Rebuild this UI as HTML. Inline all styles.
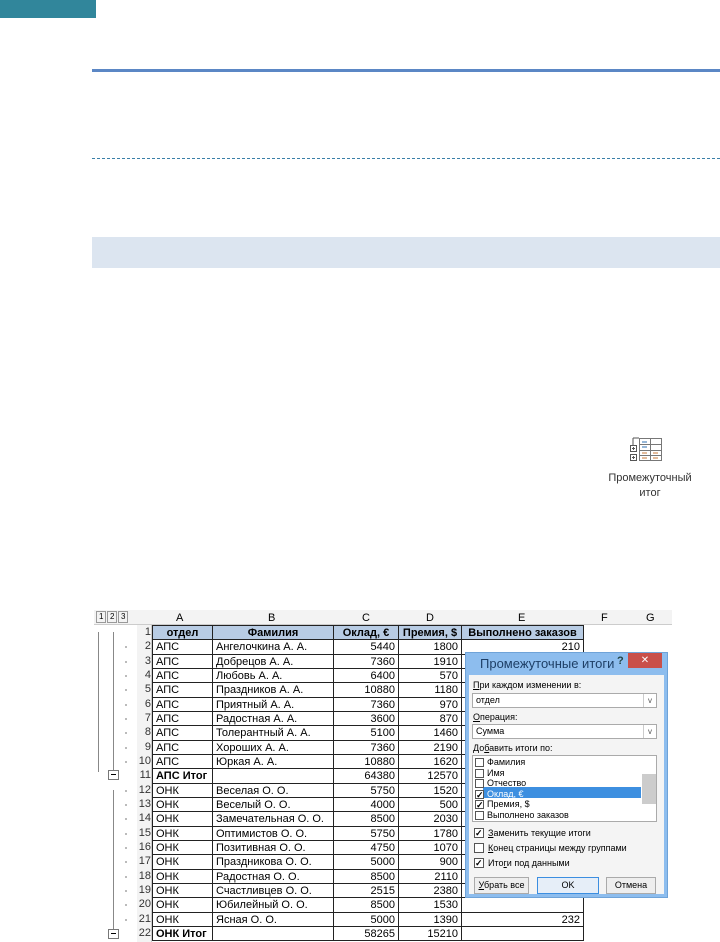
<!DOCTYPE html>
<html><head><meta charset="utf-8"><style>
*{margin:0;padding:0;box-sizing:border-box}
body{width:720px;height:942px;position:relative;background:#fff;font-family:"Liberation Sans",Arial,sans-serif;overflow:hidden}
.a{position:absolute}
.c{position:absolute;font-size:11px;line-height:14px;white-space:nowrap;color:#000}
.d{font-family:"Liberation Sans",sans-serif;font-size:9px;color:#000}
</style></head><body>
<div class="a" style="left:0;top:0;width:96px;height:18px;background:#31869b"></div>
<div class="a" style="left:92px;top:69px;width:628px;height:3px;background:#5b87c5"></div>
<div class="a" style="left:92px;top:158px;width:628px;border-top:1px dashed #3a7fa8"></div>
<div class="a" style="left:92px;top:237px;width:628px;height:31px;background:#dce5f0"></div>

<svg class="a" style="left:628px;top:437px" width="50" height="26" viewBox="0 0 50 26">
<g fill="none" stroke="#555" stroke-width="1"><path d="M5 1h6M5 1v7"/><rect x="2.5" y="8.5" width="6" height="6"/><rect x="2.5" y="17.5" width="6" height="6"/><path d="M4 11.5h3M5.5 10v3M4 20.5h3M5.5 19v3"/></g>
<g fill="none" stroke="#777"><rect x="11.5" y="1.5" width="22" height="22"/><path d="M11.5 7.5h22M11.5 13.5h22M11.5 18.5h22M22.5 1.5v22"/></g>
<g stroke="#2e6fb0"><path d="M14 5h5M14 10h5"/></g><g stroke="#c87a3a"><path d="M14 16h5M25 16h5M14 21h5M25 21h5"/></g>
</svg>
<div class="a" style="left:600px;top:471px;width:100px;text-align:center;font-size:11px;line-height:15px;color:#333">Промежуточный<br>итог</div>

<div class="a" style="left:94px;top:610px;width:578px;height:332px;background:#fff"></div>
<div class="a" style="left:94px;top:610px;width:578px;height:15px;background:#f3f3f3;border-bottom:1px solid #ccc"></div>
<div class="a" style="left:94px;top:625px;width:43px;height:317px;background:#fff"></div>
<div class="a" style="left:137px;top:625px;width:15px;height:317px;background:#f3f3f3;border-right:1px solid #ccc"></div>
<div class="c d" style="left:96px;top:611px;border:1px solid #999;padding:0 2px;line-height:10px;font-size:8px">1</div>
<div class="c d" style="left:107px;top:611px;border:1px solid #999;padding:0 2px;line-height:10px;font-size:8px">2</div>
<div class="c d" style="left:118px;top:611px;border:1px solid #999;padding:0 2px;line-height:10px;font-size:8px">3</div>
<div class="c" style="left:176px;top:611px">A</div><div class="c" style="left:268px;top:611px">B</div><div class="c" style="left:362px;top:611px">C</div><div class="c" style="left:426px;top:611px">D</div><div class="c" style="left:518px;top:611px">E</div><div class="c" style="left:601px;top:611px">F</div><div class="c" style="left:646px;top:611px">G</div>
<div class="a" style="left:98px;top:632px;width:1px;height:140px;background:#888"></div>
<div class="a" style="left:113px;top:632px;width:1px;height:140px;background:#888"></div>
<div class="a" style="left:113px;top:790px;width:1px;height:140px;background:#888"></div>
<div class="a" style="left:108px;top:770px;width:11px;height:10px;border:1px solid #777;background:#fff"><div style="margin:3px 2px;height:1px;background:#000"></div></div>
<div class="a" style="left:108px;top:929px;width:11px;height:10px;border:1px solid #777;background:#fff"><div style="margin:3px 2px;height:1px;background:#000"></div></div>
<div id="rows"></div>

<div class="a" style="left:465px;top:652px;width:203px;height:246px;background:#8dbdee;border:1px solid #6fa3d8"></div>
<div class="c" style="left:480px;top:655px;font-size:13px;color:#1e3f66;line-height:17px">Промежуточные итоги</div>
<div class="c" style="left:617px;top:654px;font-weight:bold;color:#244">?</div>
<div class="a" style="left:628px;top:653px;width:34px;height:15px;background:#c9504a;color:#fff;font-size:10px;text-align:center;line-height:15px">✕</div>
<div class="a" style="left:469px;top:675px;width:195px;height:219px;background:#f4f4f4"></div>
<div class="c d" style="left:473px;top:678px;font-size:9px"><u>П</u>ри каждом изменении в:</div>
<div class="a" style="left:472px;top:693px;width:185px;height:15px;background:#fff;border:1px solid #aaa"><span class="d" style="position:absolute;left:3px;top:1px">отдел</span><span style="position:absolute;right:0;top:0;width:13px;height:13px;border-left:1px solid #ccc;font-size:8px;text-align:center;line-height:13px;color:#555">v</span></div>
<div class="c d" style="left:473px;top:710px"><u>О</u>перация:</div>
<div class="a" style="left:472px;top:724px;width:185px;height:15px;background:#fff;border:1px solid #aaa"><span class="d" style="position:absolute;left:3px;top:1px">Сумма</span><span style="position:absolute;right:0;top:0;width:13px;height:13px;border-left:1px solid #ccc;font-size:8px;text-align:center;line-height:13px;color:#555">v</span></div>
<div class="c d" style="left:473px;top:741px">До<u>б</u>авить итоги по:</div>
<div class="a" style="left:472px;top:755px;width:185px;height:67px;background:#fff;border:1px solid #aaa">
<div class="a" style="left:169px;top:18px;width:14px;height:30px;background:#ccc"></div>
<div class="a" style="left:10px;top:31px;width:158px;height:11px;background:#3d8fe0"></div>
</div>
<div id="lb"></div>
<div class="a" style="left:474px;top:877px;width:55px;height:17px;border:1px solid #aaa;background:#eee;font-size:9px;text-align:center;line-height:15px"><u>У</u>брать все</div>
<div class="a" style="left:537px;top:877px;width:62px;height:17px;border:1px solid #3c8ee0;background:#e6eef8;font-size:9px;text-align:center;line-height:15px">OK</div>
<div class="a" style="left:606px;top:877px;width:50px;height:17px;border:1px solid #aaa;background:#eee;font-size:9px;text-align:center;line-height:15px">Отмена</div>

<script>
var R=[["отдел","Фамилия","Оклад, €","Премия, $","Выполнено заказов",1],
["АПС","Ангелочкина А. А.",5440,1800,210],["АПС","Добрецов А. А.",7360,1910,""],["АПС","Любовь А. А.",6400,570,""],["АПС","Праздников А. А.",10880,1180,""],["АПС","Приятный А. А.",7360,970,""],["АПС","Радостная А. А.",3600,870,""],["АПС","Толерантный А. А.",5100,1460,""],["АПС","Хороших А. А.",7360,2190,""],["АПС","Юркая А. А.",10880,1620,""],
["АПС Итог","",64380,12570,"",2],
["ОНК","Веселая О. О.",5750,1520,""],["ОНК","Веселый О. О.",4000,500,""],["ОНК","Замечательная О. О.",8500,2030,""],["ОНК","Оптимистов О. О.",5750,1780,""],["ОНК","Позитивная О. О.",4750,1070,""],["ОНК","Праздникова О. О.",5000,900,""],["ОНК","Радостная О. О.",8500,2110,""],["ОНК","Счастливцев О. О.",2515,2380,""],["ОНК","Юбилейный О. О.",8500,1530,"2??"],["ОНК","Ясная О. О.",5000,1390,232],
["ОНК Итог","",58265,15210,"",2]];
var cols=[[152,60],[212,121],[333,65],[398,63],[461,122]],h="";
R.forEach(function(r,i){var t=625+i*14.33;
h+='<div class="c" style="left:137px;top:'+(t)+'px;width:14px;text-align:right;color:#333">'+(i+1)+'</div>';
if(r[5]!=2&&i>0)h+='<div class="a" style="left:125px;top:'+(t+7)+'px;width:2px;height:2px;background:#bbb"></div>';
cols.forEach(function(c,j){var v=r[j];if(j==4&&v==="2??")v="";
var st='left:'+c[0]+'px;top:'+t+'px;width:'+(c[1]+1)+'px;height:15.33px;border:1px solid #222;padding:0 3px;overflow:hidden;';
if(r[5]==1)st+='background:#b8cce4;font-weight:bold;text-align:center;';
else if(typeof v=="number"||j>=2)st+='text-align:right;';
if(r[5]==2&&j==0)st+='font-weight:bold;';
h+='<div class="c" style="'+st+'">'+v+'</div>';});});
document.getElementById("rows").innerHTML=h;
var L=[["Фамилия",0],["Имя",0],["Отчество",0],["Оклад, €",1],["Премия, $",1],["Выполнено заказов",0]],g="";
L.forEach(function(l,i){var t=757+i*10.5;
g+='<div class="a" style="left:475px;top:'+(t+1)+'px;width:9px;height:9px;border:1px solid #555;background:#fff;font-size:9px;line-height:8px;font-weight:bold">'+(l[1]?'✓':'')+'</div><div class="c d" style="left:487px;top:'+(t-2)+'px;'+(i==3?'color:#fff':'')+'">'+l[0]+'</div>';});
[["<u>З</u>аменить текущие итоги",1,828],["<u>К</u>онец страницы между группами",0,843],["Ито<u>г</u>и под данными",1,858]].forEach(function(l){
g+='<div class="a" style="left:474px;top:'+l[2]+'px;width:10px;height:10px;border:1px solid #555;background:#fff;font-size:9px;line-height:9px;font-weight:bold">'+(l[1]?'✓':'')+'</div><div class="c d" style="left:488px;top:'+(l[2]-2)+'px">'+l[0]+'</div>';});
document.getElementById("lb").innerHTML=g;
</script>
</body></html>
